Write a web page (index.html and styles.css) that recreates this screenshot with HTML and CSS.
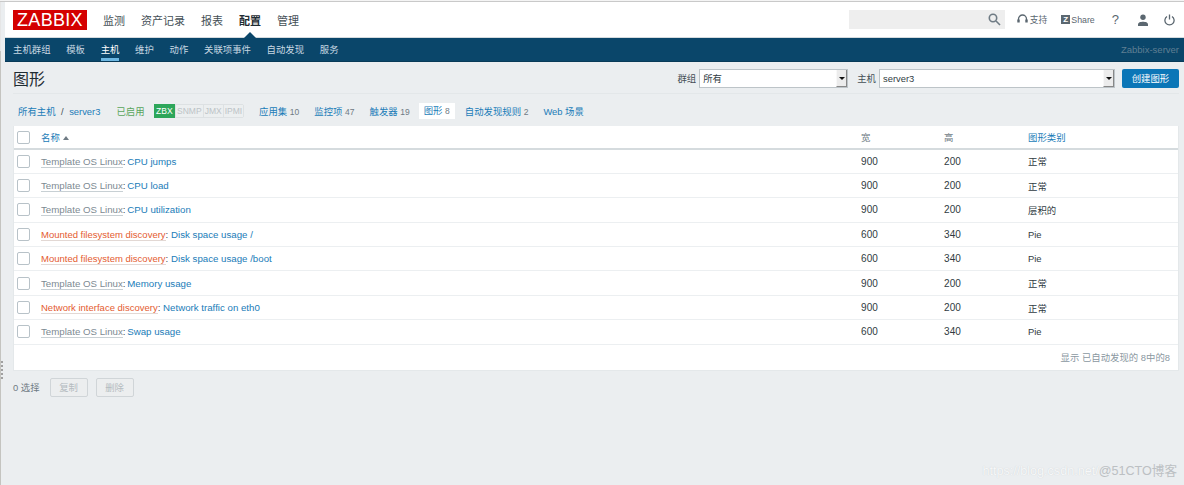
FILE: index.html
```html
<!DOCTYPE html>
<html lang="zh">
<head>
  <meta charset="UTF-8" />
  <title>图形 - Zabbix</title>
  <link rel="stylesheet" href="styles.css">
</head>
<body>

  <div class="page">

    <!-- Encabezado -->
    <div class="topbar">
      <div class="logo">ZABBIX</div>
      <div class="top-menu">
        <a href="#">监测</a>
        <a href="#">资产记录</a>
        <a href="#">报表</a>
        <a href="#" class="current">配置</a>
        <a href="#">管理</a>
      </div>
      <div class="top-tools">
        <div class="search-box">
          <svg width="13" height="13" viewBox="0 0 13 13" fill="none" stroke="#6f7b84" stroke-width="1.6"><circle cx="5" cy="5" r="3.7"/><path d="M8 8l4 4"/></svg>
        </div>
        <a href="#" class="tool support">
          <svg width="11" height="11" viewBox="0 0 11 11" fill="none" stroke="#5b6770" stroke-width="1.3"><path d="M1.500 7V5a4 4 0 0 1 8 0v2"/><path d="M1.500 5.500v3M9.500 5.500v3" stroke-width="2.400"/></svg>
          <span>支持</span>
        </a>
        <a href="#" class="tool share">
          <span class="z-box">Z</span><span>Share</span>
        </a>
        <a href="#" class="tool help">?</a>
        <a href="#" class="tool user">
          <svg width="12" height="12" viewBox="0 0 12 12" fill="#5b6770"><circle cx="6" cy="3.200" r="2.700"/><path d="M1 12V10.500C1 8.500 3.500 7.800 6 7.800S11 8.500 11 10.500V12Z"/></svg>
        </a>
        <a href="#" class="tool power">
          <svg width="11" height="12" viewBox="0 0 11 12" fill="none" stroke="#5b6770" stroke-width="1.300"><path d="M3 2.500a4.600 4.600 0 1 0 5 0"/><path d="M5.500 .5v5"/></svg>
        </a>
      </div>
    </div>

    <!-- Menu -->
    <div class="sub-menu">
      <a href="#">主机群组</a>
      <a href="#">模板</a>
      <a href="#" class="current">主机</a>
      <a href="#">维护</a>
      <a href="#">动作</a>
      <a href="#">关联项事件</a>
      <a href="#">自动发现</a>
      <a href="#">服务</a>
      <span class="server-name">Zabbix-server</span>
    </div>

    <!-- Titulo y filtros -->
    <div class="title-row">
      <h1>图形</h1>
      <div class="filters">
        <label>群组</label>
        <div class="fake-select group-select"><span>所有</span><i class="select-arrow"></i></div>
        <label>主机</label>
        <div class="fake-select host-select"><span>server3</span><i class="select-arrow"></i></div>
        <button class="create-button">创建图形</button>
      </div>
    </div>

    <!-- Enlaces del host -->
    <div class="host-nav">
      <a href="#" class="crumb">所有主机</a>
      <span class="slash">/</span>
      <a href="#" class="crumb server">server3</a>
      <span class="enabled">已启用</span>
      <div class="avail">
        <span class="on">ZBX</span><span>SNMP</span><span>JMX</span><span>IPMI</span>
      </div>
      <a href="#" class="item">应用集 <small>10</small></a>
      <a href="#" class="item">监控项 <small>47</small></a>
      <a href="#" class="item">触发器 <small>19</small></a>
      <a href="#" class="item selected">图形 <small>8</small></a>
      <a href="#" class="item">自动发现规则 <small>2</small></a>
      <a href="#" class="item">Web 场景</a>
    </div>

    <!-- Tabla -->
    <div class="card">
      <table class="graphs">
        <thead>
          <tr>
            <th class="col-check"><span class="check"></span></th>
            <th class="col-name"><a href="#">名称</a><i class="sort-up"></i></th>
            <th class="col-w">宽</th>
            <th class="col-h">高</th>
            <th><a href="#">图形类别</a></th>
          </tr>
        </thead>
        <tbody>
          <tr>
            <td><span class="check"></span></td>
            <td class="name"><a href="#" class="tpl">Template OS Linux</a><span class="colon">:</span> <a href="#">CPU jumps</a></td>
            <td class="num">900</td><td class="num">200</td><td>正常</td>
          </tr>
          <tr>
            <td><span class="check"></span></td>
            <td class="name"><a href="#" class="tpl">Template OS Linux</a><span class="colon">:</span> <a href="#">CPU load</a></td>
            <td class="num">900</td><td class="num">200</td><td>正常</td>
          </tr>
          <tr>
            <td><span class="check"></span></td>
            <td class="name"><a href="#" class="tpl">Template OS Linux</a><span class="colon">:</span> <a href="#">CPU utilization</a></td>
            <td class="num">900</td><td class="num">200</td><td>层积的</td>
          </tr>
          <tr>
            <td><span class="check"></span></td>
            <td class="name"><a href="#" class="disc">Mounted filesystem discovery</a><span class="colon">:</span> <a href="#">Disk space usage /</a></td>
            <td class="num">600</td><td class="num">340</td><td>Pie</td>
          </tr>
          <tr>
            <td><span class="check"></span></td>
            <td class="name"><a href="#" class="disc">Mounted filesystem discovery</a><span class="colon">:</span> <a href="#">Disk space usage /boot</a></td>
            <td class="num">600</td><td class="num">340</td><td>Pie</td>
          </tr>
          <tr>
            <td><span class="check"></span></td>
            <td class="name"><a href="#" class="tpl">Template OS Linux</a><span class="colon">:</span> <a href="#">Memory usage</a></td>
            <td class="num">900</td><td class="num">200</td><td>正常</td>
          </tr>
          <tr>
            <td><span class="check"></span></td>
            <td class="name"><a href="#" class="disc">Network interface discovery</a><span class="colon">:</span> <a href="#">Network traffic on eth0</a></td>
            <td class="num">900</td><td class="num">200</td><td>正常</td>
          </tr>
          <tr>
            <td><span class="check"></span></td>
            <td class="name"><a href="#" class="tpl">Template OS Linux</a><span class="colon">:</span> <a href="#">Swap usage</a></td>
            <td class="num">600</td><td class="num">340</td><td>Pie</td>
          </tr>
        </tbody>
      </table>
      <div class="table-info">显示 已自动发现的 8中的8</div>
    </div>

    <!-- Acciones -->
    <div class="actions">
      <span class="selected-count">0 选择</span>
      <button disabled>复制</button>
      <button disabled>删除</button>
    </div>

  </div>

  <div class="drag-handle"></div>
  <div class="watermark"><span class="wm-url">https://blog.csdn.net/</span><span class="wm-site">@51CTO博客</span></div>

</body>
</html>
```

FILE: styles.css
```css
html {
  height: 100%;
  background-color: #f4f4f4;
}

body {
  margin: 1px 0 0;
  height: 484px;
  overflow: hidden;
  position: relative;
  box-sizing: border-box;
  border-top: 1px solid #c9c9c9;
  font-family: "Liberation Sans", "Noto Sans CJK SC", sans-serif;
  font-size: 9.400px;
  color: #2f3b42;
}

a {
  color: #1a7cb8;
  text-decoration: none;
}

.page {
  height: 483px;
  background-color: #ebeef0;
  border-left: 1px solid #c4c4c0;
  border-image: linear-gradient(#e6e6e6 50px, #c4c4c0 50px) 1;
}

.topbar {
  height: 35px;
  margin-left: 4px;
  padding-left: 8px;
  background-color: white;
  border-bottom: 1px solid #d5dbde;
  display: flex;
  align-items: center;
}

.logo {
  width: 74px;
  height: 20px;
  line-height: 20px;
  background-color: #d40000;
  color: white;
  font-size: 18px;
  letter-spacing: 0.3px;
  text-align: center;
}

.top-menu {
  display: flex;
  margin-left: 16px;
  gap: 16px;
}

.top-menu a {
  color: #444f56;
  font-size: 11px;
}

.top-menu a.current {
  color: #1f2c33;
  font-weight: bold;
  position: relative;
}

.top-menu a.current::after {
  content: "";
  position: absolute;
  left: 5px;
  top: 20px;
  border-left: 6px solid transparent;
  border-right: 6px solid transparent;
  border-bottom: 6px solid #0a466a;
}

.top-tools {
  margin-left: auto;
  display: flex;
  align-items: center;
}

.search-box {
  width: 156px;
  height: 19px;
  background-color: #eeeeee;
  display: flex;
  align-items: center;
  justify-content: flex-end;
  padding-right: 4px;
  box-sizing: border-box;
}

.tool {
  color: #5b6770;
  display: flex;
  align-items: center;
}

.support {
  margin-left: 12px;
  gap: 2px;
  font-size: 8.800px;
}

.share {
  margin-left: 14px;
  font-size: 8.800px;
}

.z-box {
  width: 9px;
  height: 9px;
  line-height: 9px;
  background-color: #5b6770;
  color: white;
  font-size: 8px;
  font-weight: bold;
  text-align: center;
  margin-right: 1px;
}

.help {
  margin-left: 17px;
  font-size: 13px;
}

.user {
  margin-left: 18px;
}

.power {
  margin-left: 15px;
  margin-right: 9px;
}

.sub-menu {
  height: 23px;
  margin-left: 4px;
  padding-left: 8px;
  background-color: #0a466a;
  border-bottom: 1px solid #083a58;
  display: flex;
  align-items: center;
  gap: 15.700px;
}

.sub-menu a {
  color: #c8d8e2;
  height: 23px;
  line-height: 23px;
}

.sub-menu a.current {
  color: white;
  box-shadow: inset 0 -3px 0 #6db7e2;
}

.server-name {
  margin-left: auto;
  margin-right: 5px;
  color: #5f7f93;
  font-size: 9.500px;
}

.title-row {
  margin: 0 5px 0 12px;
  height: 32px;
  padding-top: 1px;
  box-sizing: border-box;
  display: flex;
  align-items: center;
  justify-content: space-between;
  border-bottom: 1px solid #e3e7e9;
}

h1 {
  margin: 0;
  font-size: 16px;
  font-weight: normal;
  color: #1f2c33;
}

.filters {
  display: flex;
  align-items: center;
  gap: 3px;
}

.filters label {
  color: #444f56;
}

.fake-select {
  height: 17px;
  background-color: white;
  border: 1px solid #bdc4c8;
  display: flex;
  align-items: center;
  justify-content: space-between;
  padding-left: 3px;
}

.group-select {
  width: 144px;
  margin-right: 6px;
}

.host-select {
  width: 231px;
  margin-right: 4px;
}

.select-arrow {
  width: 9px;
  height: 16px;
  background-color: #ececec;
  border-left: 1px solid #f8f8f8;
  border-right: 1px solid #888;
  border-bottom: 1px solid #888;
  position: relative;
}

.select-arrow::after {
  content: "";
  position: absolute;
  left: 2px;
  top: 7px;
  border-left: 3px solid transparent;
  border-right: 3px solid transparent;
  border-top: 3px solid #111;
}

.create-button {
  width: 57px;
  height: 19px;
  padding: 0;
  background-color: #0b76b7;
  color: white;
  border: none;
  border-radius: 2px;
  font: inherit;
  cursor: pointer;
}

.host-nav {
  height: 16px;
  margin: 9px 0 7px 17px;
  display: flex;
  align-items: center;
  white-space: nowrap;
}

.slash {
  margin: 0 5.500px;
  color: #444f56;
}

.enabled {
  margin-left: 16px;
  color: #58a55c;
}

.avail {
  margin-left: 9px;
  display: flex;
  height: 12px;
  border: 1px solid #dde1e3;
  border-radius: 2px;
}

.avail span {
  color: #bcc3c7;
  background-color: #eceff0;
  border-left: 1px solid #dde1e3;
  padding: 0 1px;
  line-height: 12px;
  font-size: 8.500px;
}

.avail span.on {
  background-color: #2da65a;
  color: white;
  border-left: none;
  margin: -1px 0 -1px -1px;
  padding: 1px 2.500px;
}

.item {
  margin-left: 15px;
}

.item small {
  font-size: 8.500px;
  color: #6f7b84;
}

.item.selected {
  background-color: white;
  padding: 0 5px;
  margin: 0 -5px 0 9px;
  line-height: 16px;
}

.card {
  margin: 0 5px 0 12px;
  background-color: white;
  border: 1px solid #e4e8ea;
  border-top: none;
}

.graphs {
  width: 100%;
  border-collapse: collapse;
  table-layout: fixed;
}

.graphs th {
  height: 22px;
  text-align: left;
  font-weight: normal;
  color: #6f7b84;
  padding: 0;
  border-bottom: 2px solid #d5dbde;
}

.graphs td {
  height: 24.400px;
  padding: 0;
  box-sizing: border-box;
  border-bottom: 1px solid #ecefF1;
}

.graphs td.num {
  font-size: 10px;
  letter-spacing: 0.1px;
}

.graphs td.name {
  font-size: 9.700px;
}

.col-check {
  width: 27px;
}

.col-name {
  width: 820px;
}

.col-w {
  width: 83px;
}

.col-h {
  width: 84px;
}

.check {
  display: block;
  width: 11px;
  height: 11px;
  margin-left: 3px;
  border: 1px solid #b8c2c8;
  border-radius: 2px;
  background-color: white;
}

.sort-up {
  display: inline-block;
  margin-left: 3px;
  vertical-align: 1px;
  border-left: 3px solid transparent;
  border-right: 3px solid transparent;
  border-bottom: 4px solid #6f7b84;
}

.tpl {
  color: #7d8a92;
  border-bottom: 1px solid #c8d0d4;
}

.disc {
  color: #e45b30;
  font-size: 9.500px;
  border-bottom: 1px solid #e2d8d4;
}

.colon {
  color: #444f56;
}

.tpl + .colon {
  margin-right: -1px;
}

.table-info {
  height: 25px;
  line-height: 26px;
  padding-right: 8px;
  text-align: right;
  color: #8a979f;
}

.actions {
  margin: 7px 0 0 12px;
  display: flex;
  align-items: center;
}

.selected-count {
  color: #6f7b84;
  margin-right: 10px;
}

.actions button {
  width: 38px;
  height: 19px;
  padding: 0;
  margin-right: 8px;
  background-color: #eceeef;
  border: 1px solid #d0d5d8;
  border-radius: 2px;
  color: #b4bbc0;
  font: inherit;
}

.drag-handle {
  position: absolute;
  left: 1px;
  top: 358px;
  width: 2px;
  height: 20px;
  background-image: radial-gradient(circle, #9a9a9a 0.7px, transparent 0.8px);
  background-size: 2px 4px;
}

.watermark {
  position: absolute;
  right: 7px;
  bottom: 6px;
  font-size: 12.600px;
  white-space: nowrap;
}

.wm-url {
  color: #f7f8f9;
  text-shadow: 0 0 1px #c6cbce;
}

.wm-site {
  color: #bcc0c3;
}
```
